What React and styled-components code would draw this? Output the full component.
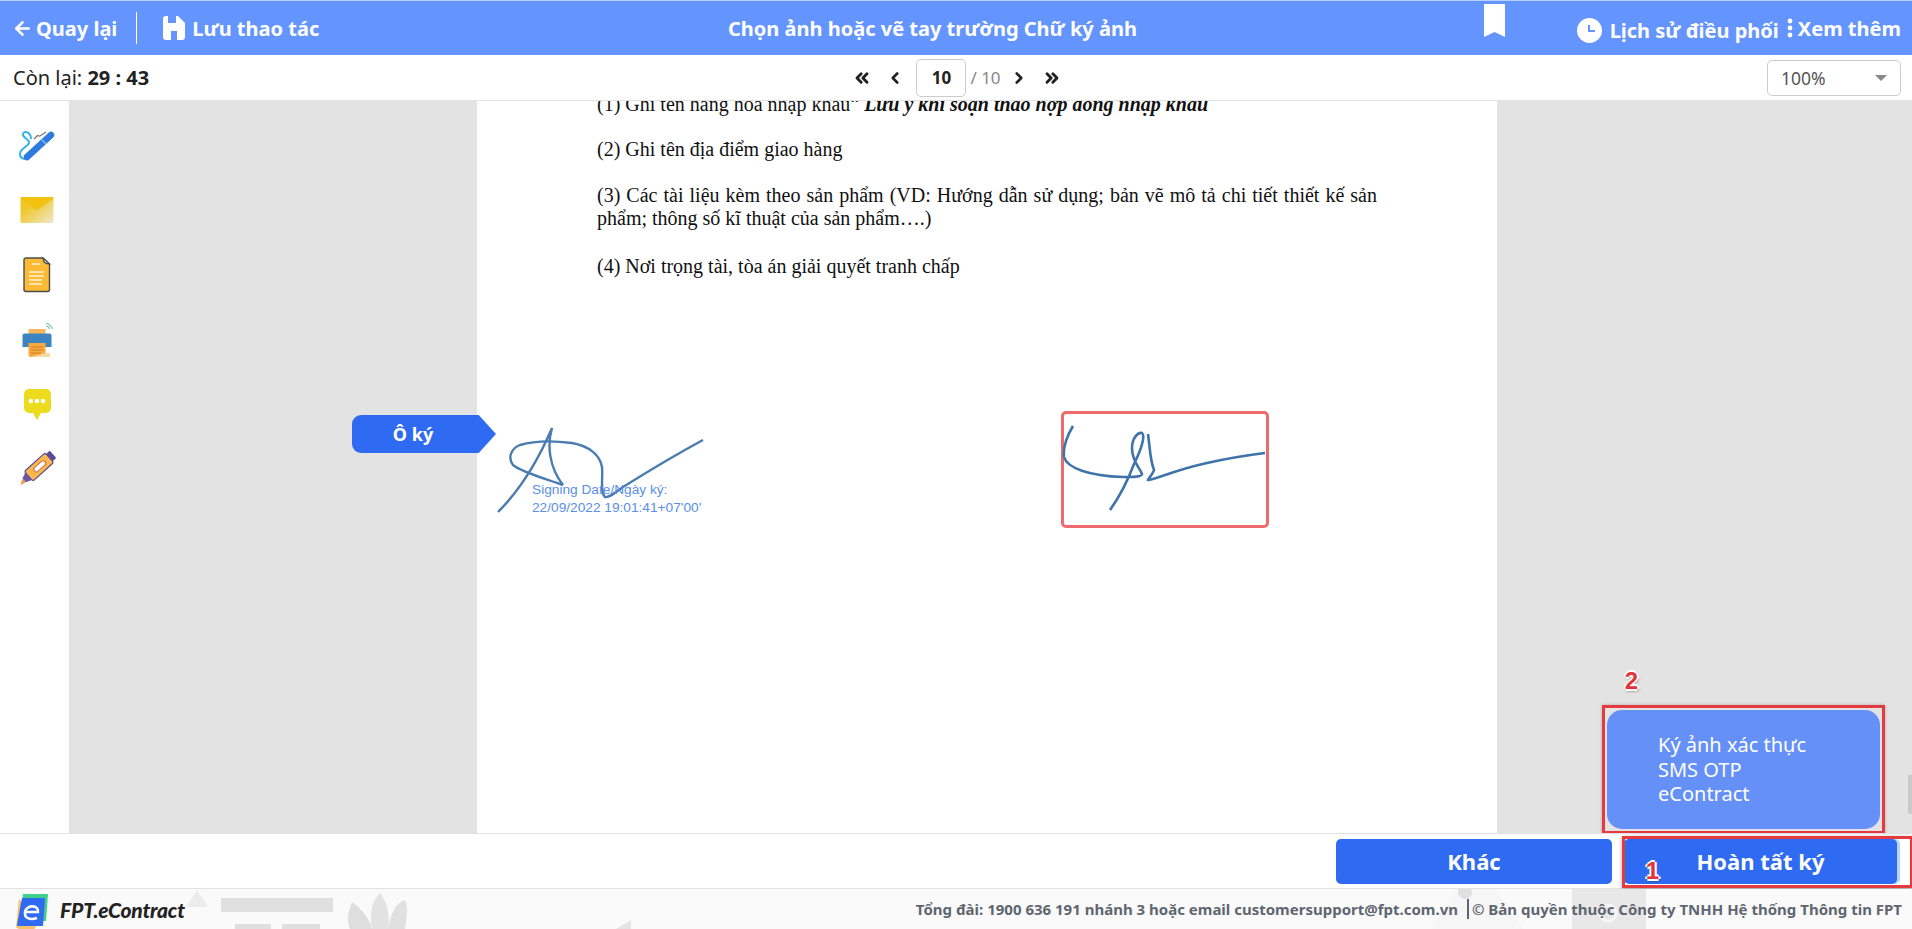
import React from 'react'
import styled, { createGlobalStyle } from 'styled-components'
import { ArrowLeft, ChevronLeft, ChevronRight, ChevronsLeft, ChevronsRight } from 'lucide-react'

const GlobalStyle = createGlobalStyle`
  html, body {
    margin: 0;
    height: 100%;
    overflow: hidden;
    background: #fff;
  }
  #root {
    height: 100%;
  }
  * {
    box-sizing: border-box;
  }
`

const Page = styled.div`
  height: 929px;
  display: flex;
  flex-direction: column;
  font-family: 'Noto Sans', sans-serif;
  color: #222;
`

const Header = styled.header`
  height: 55px;
  flex: none;
  display: grid;
  grid-template-columns: 716px auto 1fr;
  align-items: center;
  padding: 0 11px 0 12px;
  background: #6495ff;
  border-top: 1px solid #b9cfff;
  color: #fff;
  font-weight: 700;
  font-size: 20px;
`

const HeaderLeft = styled.div`
  display: flex;
  align-items: center;
`

const HeaderRight = styled.div`
  display: flex;
  align-items: center;
  justify-content: flex-end;
`

const HeaderLink = styled.span`
  display: flex;
  align-items: center;
  gap: ${p => p.$gap || 5}px;
  margin-top: ${p => p.$drop || 0}px;
  white-space: nowrap;
`

const Divider = styled.span`
  width: 1px;
  height: 32px;
  margin: 0 26px 0 19px;
  background: #fff;
`

const Title = styled.h1`
  margin: 0;
  font-size: 20px;
  font-weight: 700;
`

const Bookmark = styled.svg`
  width: 21px;
  height: 33px;
  margin: -16px 72px 0 0;
`

const KebabDots = styled.svg`
  margin-left: 8px;
`

const Toolbar = styled.div`
  height: 46px;
  flex: none;
  display: grid;
  grid-template-columns: 1fr auto 1fr;
  align-items: center;
  padding: 0 11px 0 13px;
  background: #fff;
  border-bottom: 1px solid #e2e2e2;
  font-size: 20px;
`

const Countdown = styled.div`
  b {
    font-weight: 700;
  }
`

const Pager = styled.div`
  display: flex;
  align-items: center;
  color: #222;
`

const PageBox = styled.div`
  width: 50px;
  height: 38px;
  margin: 0 4px 0 12px;
  display: flex;
  align-items: center;
  justify-content: center;
  border: 1px solid #ccc;
  border-radius: 5px;
  font-size: 17px;
  font-weight: 700;
`

const PageTotal = styled.span`
  margin-right: 9px;
  color: #888;
  font-size: 17px;
`

const PagerGap = styled.span`
  width: ${p => p.$w}px;
`

const ZoomSelect = styled.div`
  justify-self: end;
  width: 134px;
  height: 36px;
  padding: 0 13px;
  display: flex;
  align-items: center;
  justify-content: space-between;
  border: 1px solid #ccc;
  border-radius: 5px;
  color: #555;
  font-size: 17.500px;

  i {
    width: 0;
    height: 0;
    border-left: 6px solid transparent;
    border-right: 6px solid transparent;
    border-top: 6px solid #888;
  }
`

const Workspace = styled.main`
  flex: 1;
  min-height: 0;
  display: flex;
`

const SideRail = styled.nav`
  width: 69px;
  flex: none;
  padding-top: 26px;
  display: flex;
  flex-direction: column;
  align-items: center;
  gap: 29px;
  background: #fff;
`

const RailIcon = styled.svg`
  width: 36px;
  height: 36px;
  display: block;
  overflow: visible;
`

const Viewer = styled.div`
  position: relative;
  flex: 1;
  display: flex;
  overflow: hidden;
  background: #e3e3e3;
`

const GrayGutter = styled.div`
  flex: none;
  width: ${p => p.$w}px;
`

const DocSheet = styled.article`
  position: relative;
  width: 1020px;
  flex: none;
  padding: 0 120px;
  background: #fff;
  font-family: 'Liberation Serif', serif;
  font-size: 20px;
  line-height: 23px;
  color: #111;
  overflow: hidden;
`

const DocLine = styled.p`
  margin: ${p => p.$before || 0}px 0 ${p => p.$after || 0}px;
  text-align: ${p => p.$justify ? 'justify' : 'left'};
  text-align-last: ${p => p.$justify ? 'justify' : 'auto'};
  white-space: ${p => p.$justify ? 'normal' : 'nowrap'};
`

const SignTag = styled.div`
  position: absolute;
  left: 283px;
  top: 314px;
  width: 144px;
  height: 38px;
  padding-right: 22px;
  display: flex;
  align-items: center;
  justify-content: center;
  background: #2f6bf2;
  border-radius: 9px 0 0 9px;
  clip-path: polygon(0 0, 88% 0, 100% 50%, 88% 100%, 0 100%);
  color: #fff;
  font-weight: 700;
  font-size: 18px;
`

const SignedStamp = styled.div`
  position: absolute;
  left: 20px;
  top: 326px;
  width: 210px;
  height: 88px;
  font-family: 'Liberation Sans', sans-serif;
  font-size: 13.700px;
  line-height: 17.500px;
  color: #5a8fe8;

  svg {
    position: absolute;
    left: 0;
    top: 0;
  }

  div {
    position: absolute;
    left: 35px;
    top: 54px;
    white-space: nowrap;
  }
`

const SignField = styled.div`
  position: absolute;
  left: 584px;
  top: 310px;
  width: 208px;
  height: 117px;
  border: 3px solid #ef6a6c;
  border-radius: 5px;

  svg {
    display: block;
    overflow: visible;
  }
`

const SmsPanel = styled.div`
  position: absolute;
  right: 32px;
  bottom: 4px;
  width: 273px;
  height: 119px;
  padding: 23px 0 0 51px;
  background: #6590f7;
  border-radius: 15px;
  color: #fff;
  font-size: 20px;
  line-height: 24.500px;
`

const RedFrame = styled.div`
  position: absolute;
  right: 27px;
  bottom: -1px;
  width: 283px;
  height: 129px;
  border: 3px solid #e53a40;
  box-shadow: 0 0 3px rgba(0, 0, 0, .25);
`

const Marker = styled.span`
  position: absolute;
  right: ${p => p.$right}px;
  ${p => p.$top !== undefined ? `top: ${p.$top}px;` : `bottom: ${p.$bottom}px;`}
  color: #e5333a;
  font-family: 'Liberation Sans', sans-serif;
  font-size: 24px;
  font-weight: 700;
  line-height: 28px;
  text-shadow: -2px 0 #fff, 2px 0 #fff, 0 -2px #fff, 0 2px #fff, 1px 2px 3px rgba(0, 0, 0, .5);
  z-index: 3;
`

const ScrollThumb = styled.div`
  position: absolute;
  right: 0;
  bottom: 19px;
  width: 4px;
  height: 39px;
  background: #c9c9c9;
  border-radius: 2px 0 0 2px;
`

const ActionBar = styled.div`
  position: relative;
  height: 56px;
  flex: none;
  display: flex;
  align-items: center;
  justify-content: flex-end;
  gap: 12px;
  padding: 0 15px 0 0;
  background: #fff;
  border-top: 1px solid #e2e2e2;
  border-bottom: 1px solid #e2e2e2;
`

const ActionButton = styled.button`
  width: ${p => p.$w}px;
  height: 45px;
  border: 0;
  border-radius: 5px;
  background: #2f6bf2;
  color: #fff;
  font-family: inherit;
  font-size: 22px;
  font-weight: 700;
  box-shadow: ${p => p.$focused ? '3px 0 0 #b5d6f4' : 'none'};
`

const FinishFrame = styled.div`
  position: absolute;
  right: 0;
  top: 2px;
  width: 290px;
  height: 52px;
  border: 3px solid #e53a40;
  border-right-width: 2px;
  box-shadow: 0 1px 4px rgba(0, 0, 0, .35);
`

const Footer = styled.footer`
  position: relative;
  height: 40px;
  flex: none;
  display: flex;
  align-items: center;
  justify-content: space-between;
  padding: 0 10px 0 16px;
  background: #fafafa;
  overflow: hidden;
`

const FooterArt = styled.svg`
  position: absolute;
  left: 0;
  top: 0;
`

const Brand = styled.div`
  position: relative;
  display: flex;
  align-items: center;
  gap: 12px;
  font-family: 'Lato', sans-serif;
  font-size: 21px;
  font-weight: 900;
  font-style: italic;
  letter-spacing: -.2px;
  color: #222;
`

const BrandMark = styled.svg`
  margin-top: 6px;
`

const Legal = styled.div`
  position: relative;
  color: #5f6670;
  font-size: 15px;
  font-weight: 700;
  white-space: nowrap;

  span {
    margin-left: 5px;
    padding-left: 3px;
    border-left: 2px solid #5f6670;
  }
`

const PenIcon = () => (
  <RailIcon viewBox="0 0 36 36">
    <path d="M14 12C14 5 7 3 6 7 5 11 13 12 12 16 11 20 3 21 3 27 3 32 8 33 11 31" fill="none" stroke="#36b3e8" strokeWidth="2" />
    <path d="M17 12l3-3c2-2 1 1 3 0l6-4" fill="none" stroke="#777" strokeWidth="1.200" />
    <path d="M10 30 34 8" stroke="#2f7ade" strokeWidth="6.500" strokeLinecap="round" />
    <path d="m23 14 5 5" stroke="#7db8ef" strokeWidth="1.600" transform="translate(1 -2)" />
  </RailIcon>
)

const MailIcon = () => (
  <RailIcon viewBox="0 0 36 36">
    <defs>
      <linearGradient id="mailFill" x1="0" y1="0" x2="1" y2="1">
        <stop offset="0.300" stopColor="#f0c628" />
        <stop offset="1" stopColor="#efe9cf" />
      </linearGradient>
    </defs>
    <rect x="3.500" y="5" width="33" height="26" rx="1.500" fill="url(#mailFill)" />
    <path d="M3.500 6.500C3.500 5.500 4.500 5 5 5h30c1 0 1.500.5 1.500 1.500L20 18Z" fill="#f2c20f" />
  </RailIcon>
)

const NoteIcon = () => (
  <RailIcon viewBox="0 0 36 36">
    <path d="M9 1h17l6.500 6v25.500a2 2 0 0 1-2 2H9a2 2 0 0 1-2-2V3a2 2 0 0 1 2-2Z" fill="#fdbb35" stroke="#4c4c4c" strokeWidth="1.400" />
    <path d="M26 1c0 4 2 6 6.500 6Z" fill="#fff" stroke="#4c4c4c" strokeWidth="1.200" />
    <path d="M15 7h8M12 15h15M12 19h15M12 23h13M12 27h13" stroke="#fff3d4" strokeWidth="1.400" />
  </RailIcon>
)

const PrinterIcon = () => (
  <RailIcon viewBox="0 0 36 36">
    <path d="M29 1c3 1 5.500 3 6.500 6M29 4c2 0 3 1.500 3.500 3" fill="none" stroke="#7bc89a" strokeWidth="1.100" />
    <rect x="11.500" y="7" width="17" height="6" fill="#f7b65a" />
    <path d="M7.500 11.500h25a2 2 0 0 1 2 2V25h-29V13.500a2 2 0 0 1 2-2Z" fill="#3d85c0" />
    <path d="M11.500 21h17v14h-15a2 2 0 0 1-2-2Z" fill="#f7a93c" />
    <path d="M28.500 31h4c1 0 1 4 0 4h-19Z" fill="#f9d9a3" />
    <path d="M14 25h12M14 28h12M14 31h10" stroke="#c9822a" strokeWidth="1" />
  </RailIcon>
)

const ChatIcon = () => (
  <RailIcon viewBox="0 0 36 36">
    <path d="M12 2h17a5 5 0 0 1 5 5v14a5 5 0 0 1-5 5h-5l-4 7-4-7h-4a5 5 0 0 1-5-5V7a5 5 0 0 1 5-5Z" fill="#ecdc1d" />
    <circle cx="14" cy="14" r="2.300" fill="#fff" />
    <circle cx="20" cy="14" r="2.300" fill="#fff" />
    <circle cx="26" cy="14" r="2.300" fill="#fff" />
  </RailIcon>
)

const MarkerIcon = () => (
  <RailIcon viewBox="0 0 36 36">
    <g transform="translate(22 15) rotate(-42)">
      <rect x="-14" y="-6.500" width="28" height="13" rx="2" fill="#fbb64c" stroke="#5c4a9a" strokeWidth="1.200" />
      <rect x="14" y="-5" width="5" height="10" rx="1.500" fill="#5c4a9a" />
      <rect x="-6" y="-2.500" width="14" height="5" rx="2.500" fill="#fff" stroke="#c9704c" strokeWidth="1" />
      <path d="M-14-5-20-2.500v5l6 2.500Z" fill="#6a57a8" />
      <path d="M-20-2.500-26 1-20 2.500Z" fill="#f09a4c" />
    </g>
  </RailIcon>
)

const railIcons = [PenIcon, MailIcon, NoteIcon, PrinterIcon, ChatIcon, MarkerIcon]

const App = () => {
  return (
    <Page>
      <GlobalStyle />
      <Header>
        <HeaderLeft>
          <HeaderLink $gap={3}>
            <ArrowLeft size={21} strokeWidth={3} />
            Quay lại
          </HeaderLink>
          <Divider />
          <HeaderLink $gap={7}>
            <svg width="22" height="24" viewBox="0 0 22 24">
              <path d="M3 0h12l7 7v14a3 3 0 0 1-3 3H3a3 3 0 0 1-3-3V3a3 3 0 0 1 3-3Z" fill="#fff" />
              <rect x="5" y="0" width="8" height="7" fill="#6495ff" />
              <rect x="8" y="15" width="6" height="9" fill="#6495ff" />
            </svg>
            Lưu thao tác
          </HeaderLink>
        </HeaderLeft>
        <Title>Chọn ảnh hoặc vẽ tay trường Chữ ký ảnh</Title>
        <HeaderRight>
          <Bookmark viewBox="0 0 21 33">
            <path d="M0 0h21v33l-10.500-5L0 33Z" fill="#fff" />
          </Bookmark>
          <HeaderLink $gap={8} $drop={4}>
            <svg width="25" height="25" viewBox="0 0 25 25">
              <circle cx="12.500" cy="12.500" r="12.500" fill="#fff" />
              <path d="M12 7v6h6" fill="none" stroke="#6495ff" strokeWidth="2" />
            </svg>
            Lịch sử điều phối
          </HeaderLink>
          <HeaderLink $gap={5}>
            <KebabDots width="6" height="20" viewBox="0 0 6 20">
              <circle cx="3" cy="3" r="2.400" fill="#fff" />
              <circle cx="3" cy="10" r="2.400" fill="#fff" />
              <circle cx="3" cy="17" r="2.400" fill="#fff" />
            </KebabDots>
            Xem thêm
          </HeaderLink>
        </HeaderRight>
      </Header>
      <Toolbar>
        <Countdown>Còn lại: <b>29 : 43</b></Countdown>
        <Pager>
          <ChevronsLeft size={20} strokeWidth={3.5} />
          <PagerGap $w={14} />
          <ChevronLeft size={18} strokeWidth={3.5} />
          <PageBox>10</PageBox>
          <PageTotal>/ 10</PageTotal>
          <ChevronRight size={18} strokeWidth={3.5} />
          <PagerGap $w={14} />
          <ChevronsRight size={20} strokeWidth={3.5} />
        </Pager>
        <ZoomSelect>100%<i /></ZoomSelect>
      </Toolbar>
      <Workspace>
        <SideRail>
          {railIcons.map((Icon, i) => <Icon key={i} />)}
        </SideRail>
        <Viewer>
          <GrayGutter $w={408} />
          <DocSheet>
            <DocLine $before={-8} $after={22}>(1) Ghi tên hàng hóa nhập khẩu“ <b><i>Lưu ý khi soạn thảo hợp đồng nhập khẩu</i></b></DocLine>
            <DocLine $after={23}>(2) Ghi tên địa điểm giao hàng</DocLine>
            <DocLine $justify>(3) Các tài liệu kèm theo sản phẩm (VD: Hướng dẫn sử dụng; bản vẽ mô tả chi tiết thiết kế sản</DocLine>
            <DocLine $after={25}>phẩm; thông số kĩ thuật của sản phẩm….)</DocLine>
            <DocLine>(4) Nơi trọng tài, tòa án giải quyết tranh chấp</DocLine>
            <SignedStamp>
              <svg width="210" height="88" viewBox="0 0 210 88">
                <path d="M1 85C22 64 40 36 55 1 50 18 52 40 66 58" fill="none" stroke="#4a7cb0" strokeWidth="2.400" />
                <path d="M66 58C50 52 26 46 16 38 10 30 15 21 23 18 40 13 60 14 75 16 92 19 103 28 105 40 106 52 103 66 108 70 112 71 118 66 126 60 150 45 180 27 206 13" fill="none" stroke="#4a7cb0" strokeWidth="2.400" />
              </svg>
              <div>Signing Date/Ngày ký:<br />22/09/2022 19:01:41+07'00'</div>
            </SignedStamp>
            <SignField>
              <svg width="202" height="111" viewBox="0 0 202 111">
                <path d="M9 12C3 22-1 34 0 43 3 54 25 62 59 63 68 63 78 63 78 60 76 54 68 48 68 34 68 24 74 18 78 19 82 22 76 38 70 50 64 66 56 82 46 96" fill="none" stroke="#3f74aa" strokeWidth="2.600" />
                <path d="M84 20C86 34 86 46 90 56 89 60 84 65 84 66 88 67 110 56 143 49 165 44 185 41 201 39" fill="none" stroke="#3f74aa" strokeWidth="2.600" />
              </svg>
            </SignField>
          </DocSheet>
          <GrayGutter $w={415} />
          <SignTag>Ô ký</SignTag>
          <Marker $right={274} $bottom={138}>2</Marker>
          <SmsPanel>Ký ảnh xác thực<br />SMS OTP<br />eContract</SmsPanel>
          <RedFrame />
          <ScrollThumb />
        </Viewer>
      </Workspace>
      <ActionBar>
        <ActionButton $w={276}>Khác</ActionButton>
        <ActionButton $w={273} $focused>Hoàn tất ký</ActionButton>
        <FinishFrame />
        <Marker $right={253} $top={23}>1</Marker>
      </ActionBar>
      <Footer>
        <FooterArt width="1912" height="40" viewBox="0 0 1912 40">
          <path d="M186 18 197 1l11 17Z" fill="#ececec" />
          <path d="M221 9h112v14H221ZM235 35h36v5h-36ZM282 35h38v5h-38Z" fill="#e0e0e0" />
          <path d="M350 40C345 26 351 18 352 13 362 20 370 30 372 40Z" fill="#dedede" />
          <path d="M372 40C369 24 372 12 380 4 388 14 390 28 388 40Z" fill="#e2e2e2" />
          <path d="M388 40C390 30 394 14 405 11 409 20 406 32 405 40Z" fill="#e0e0e0" />
          <path d="M616 40 631 31v9Z" fill="#e4e4e4" />
          <path d="M1572 0h74v40h-74Z" fill="#e8e8e8" />
          <path d="M1431 40 1456 0h40l27 40" fill="#f6f6f6" />
          <circle cx="1465" cy="3" r="7" fill="#e0e0e0" />
          <circle cx="1608" cy="24" r="8" fill="none" stroke="#f6f6f6" strokeWidth="3" />
        </FooterArt>
        <Brand>
          <BrandMark width="32" height="36" viewBox="0 0 32 36">
            <path d="M3 5 0 33l4 3h14l4-8Z" fill="#f7c06a" />
            <path d="M7 0h25l-2 27H4Z" fill="#3ed08a" />
            <path d="M6 4h23l-2 28H2a1 1 0 0 1-1-1Z" fill="#2f6bf2" />
            <path d="M9 18h13c1-7-11-8-13 0-1 7 6 8 12 6" fill="none" stroke="#fff" strokeWidth="2.600" />
          </BrandMark>
          FPT.eContract
        </Brand>
        <Legal>Tổng đài: 1900 636 191 nhánh 3 hoặc email customersupport@fpt.com.vn <span>© Bản quyền thuộc Công ty TNHH Hệ thống Thông tin FPT</span></Legal>
      </Footer>
    </Page>
  )
}

export default App
